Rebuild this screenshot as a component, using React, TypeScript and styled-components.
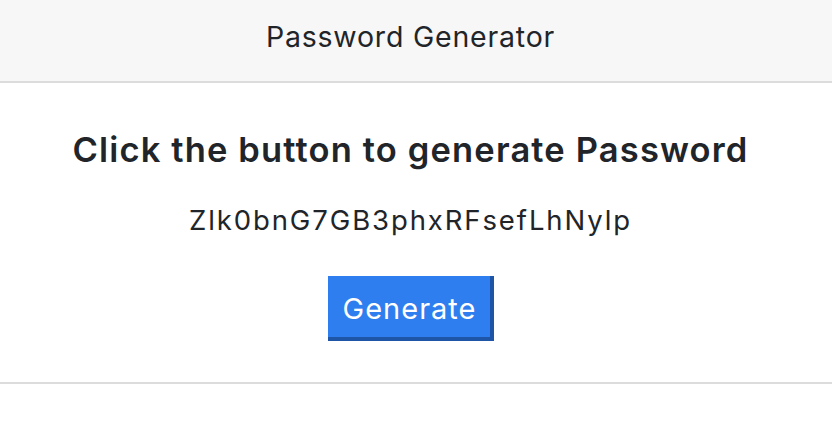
import React from "react";
import styled, { createGlobalStyle } from "styled-components";

const Global = createGlobalStyle`
  html, body { margin: 0; padding: 0; background: #fff; }
  body { font-family: Inter, "Noto Sans", sans-serif; color: #212529; }
`;

const Page = styled.div`
  display: flex;
  flex-direction: column;
`;

const Header = styled.header`
  height: 73px;
  padding: 0 11px 8px 0;
  background: #f7f7f7;
  border-bottom: 2px solid #dcdcdc;
  display: flex;
  align-items: center;
  justify-content: center;
  font-size: 28.5px;
  letter-spacing: 0.8px;
  color: #212529;
`;

const Main = styled.main`
  display: flex;
  flex-direction: column;
  align-items: center;
  padding: 45px 11px 0 0;
  height: 254px;
  border-bottom: 2px solid #dcdcdc;
`;

const Heading = styled.h1`
  margin: 0;
  font-size: 34.5px;
  font-weight: 600;
  letter-spacing: 1.15px;
  line-height: 44px;
`;

const PasswordText = styled.p`
  margin: 30px 0 0;
  font-size: 27.5px;
  letter-spacing: 1.9px;
  line-height: 36px;
`;

const Button = styled.button`
  margin-top: 38px;
  width: 166px;
  height: 65px;
  font-family: Inter, "Noto Sans", sans-serif;
  font-size: 29px;
  letter-spacing: 1px;
  color: #fff;
  background: #2f7ef0;
  border-style: solid;
  border-width: 0 4px 4px 0;
  border-color: #2f7ef0 #1f55a6 #1f55a6 #2f7ef0;
  padding: 3px 0 0 2px;
  cursor: pointer;
`;

export default function App() {
  return (
    <Page>
      <Global />
      <Header>Password Generator</Header>
      <Main>
        <Heading>Click the button to generate Password</Heading>
        <PasswordText>Zlk0bnG7GB3phxRFsefLhNylp</PasswordText>
        <Button>Generate</Button>
      </Main>
    </Page>
  );
}
